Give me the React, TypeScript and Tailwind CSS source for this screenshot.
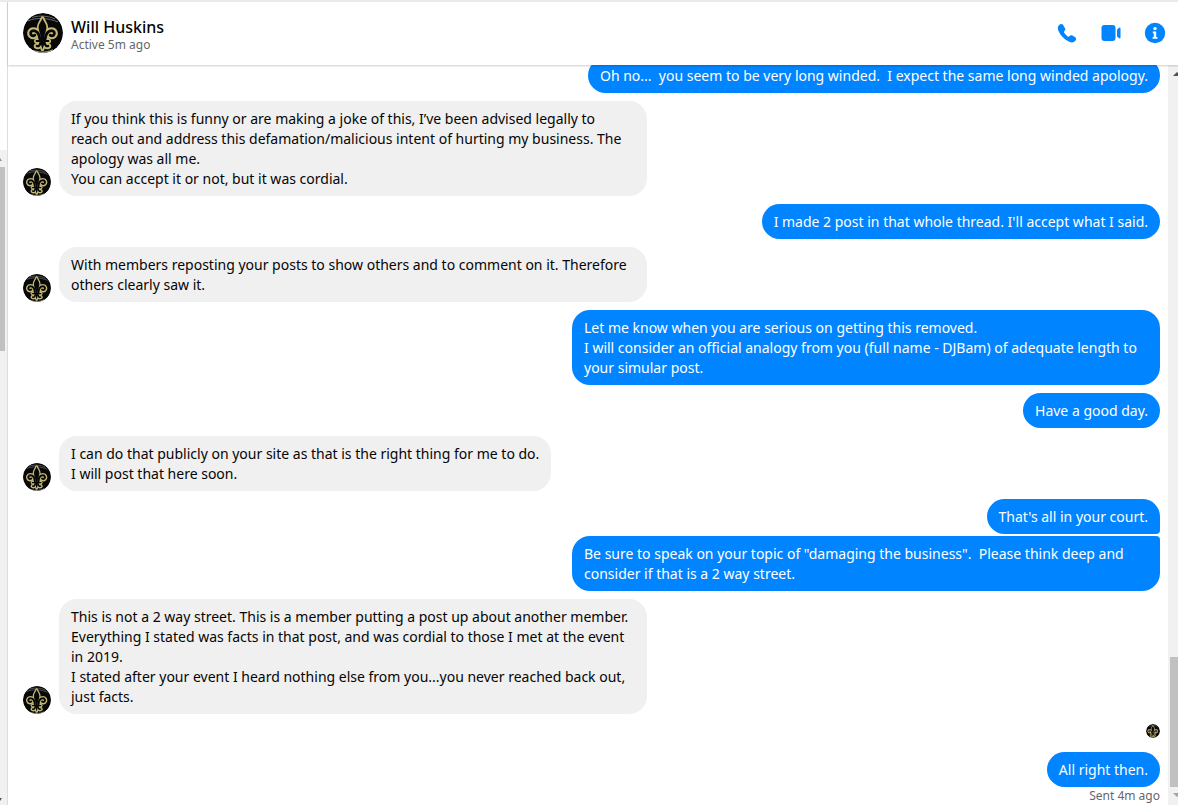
import React from "react";

type Message = {
  from: "me" | "them";
  lines: string[];
  shape?: string;
  gap?: string;
};

const messages: Message[] = [
  { from: "me", lines: ["Oh no...  you seem to be very long winded.  I expect the same long winded apology."] },
  {
    from: "them",
    gap: "mt-2",
    lines: [
      "If you think this is funny or are making a joke of this, I’ve been advised legally to",
      "reach out and address this defamation/malicious intent of hurting my business. The",
      "apology was all me.",
      "You can accept it or not, but it was cordial.",
    ],
  },
  { from: "me", gap: "mt-2", lines: ["I made 2 post in that whole thread. I'll accept what I said."] },
  {
    from: "them",
    gap: "mt-2",
    lines: [
      "With members reposting your posts to show others and to comment on it. Therefore",
      "others clearly saw it.",
    ],
  },
  {
    from: "me",
    gap: "mt-2",
    lines: [
      "Let me know when you are serious on getting this removed.",
      "I will consider an official analogy from you (full name - DJBam) of adequate length to",
      "your simular post.",
    ],
  },
  { from: "me", gap: "mt-2", lines: ["Have a good day."] },
  {
    from: "them",
    gap: "mt-2",
    lines: [
      "I can do that publicly on your site as that is the right thing for me to do.",
      "I will post that here soon.",
    ],
  },
  { from: "me", gap: "mt-2", shape: "rounded-br-sm", lines: ["That's all in your court."] },
  {
    from: "me",
    gap: "mt-0.5",
    shape: "rounded-tr-sm",
    lines: [
      "Be sure to speak on your topic of \"damaging the business\".  Please think deep and",
      "consider if that is a 2 way street.",
    ],
  },
  {
    from: "them",
    gap: "mt-2",
    lines: [
      "This is not a 2 way street. This is a member putting a post up about another member.",
      "Everything I stated was facts in that post, and was cordial to those I met at the event",
      "in 2019.",
      "I stated after your event I heard nothing else from you...you never reached back out,",
      "just facts.",
    ],
  },
];

function Avatar({ size }: { size: string }) {
  const curls =
    "M16.8 26 C16.5 20.5 13.5 17.6 10.5 17.6 C7.6 17.6 6.8 20.5 8.4 22.2 C9.4 23 11 22.8 11.8 22.2 M22.2 26 C22.5 20.5 25.5 17.6 28.5 17.6 C31.4 17.6 32.2 20.5 30.6 22.2 C29.6 23 28 22.8 27.2 22.2";
  const feet = "M17.5 29.5 C17 32.5 15.5 33.8 13.8 33 M21.5 29.5 C22 32.5 23.5 33.8 25.2 33";
  const petal =
    "M19.5 5 C18.8 8 15.6 10.5 15.6 14.5 C15.8 18.5 17.8 21 18 26 L17.8 31 L19.5 36.5 L21.2 31 L21 26 C21.2 21 23.2 18.5 23.4 14.5 C23.4 10.5 20.2 8 19.5 5 Z";
  return (
    <svg viewBox="0 0 40 40" className={`shrink-0 rounded-full ${size}`} role="img" aria-label="Will Huskins">
      <circle cx="20" cy="20" r="20" fill="#080808" />
      <path d="M5 8 C13 4 26 5 35 9 M9 4.5 C16 2 26 3 32 6" fill="none" stroke="#6a6d6f" strokeWidth="1" />
      <path d="M11 38 C17 40 24 40 30 37" fill="none" stroke="#999999" strokeWidth="1.4" />
      <g fill="none" strokeLinecap="round" strokeLinejoin="round">
        <path d={curls} stroke="#c4b972" strokeWidth="6.8" />
        <path d={feet} stroke="#c4b972" strokeWidth="6" />
        <path d={petal} stroke="#c4b972" strokeWidth="3.6" />
        <path d="M13.5 28 H25.5" stroke="#c4b972" strokeWidth="5" />
        <path d={curls} stroke="#080808" strokeWidth="2.8" />
        <path d={feet} stroke="#080808" strokeWidth="2.2" />
        <path d={petal} fill="#080808" />
        <path d="M13.5 28 H25.5" stroke="#080808" strokeWidth="1.8" />
      </g>
    </svg>
  );
}

function Bubble({ from, lines, shape = "" }: Message) {
  const look = from === "me" ? "bg-[#0084ff] text-white" : "bg-[#f0f0f0] text-[#050505]";
  const width = lines.length > 1 && lines.some((l) => l.length > 78) ? "w-[588px]" : "";
  return (
    <div className={`max-w-[588px] rounded-[18px] px-3 pt-2 pb-[7px] text-sm leading-5 whitespace-pre ${look} ${width} ${shape}`}>
      {lines.map((line) => (
        <p key={line}>{line}</p>
      ))}
    </div>
  );
}

function Row(message: Message) {
  const mine = message.from === "me";
  return (
    <li className={`flex shrink-0 items-end gap-2 ${mine ? "justify-end" : ""} ${message.gap ?? ""}`}>
      {!mine && <Avatar size="size-7" />}
      <Bubble {...message} />
    </li>
  );
}

function SidebarEdge() {
  return (
    <div className="flex w-2 shrink-0 flex-col border-r border-[#dddddd] pt-[148px]" aria-hidden="true">
      <div className="flex flex-1 flex-col overflow-hidden bg-[#f1f1f1]">
        <svg viewBox="0 0 7 17" className="h-[17px] w-[7px]">
          <path d="M-2 11 L0 8 L2 11 Z" fill="#909090" />
        </svg>
        <div className="h-[184px] w-[5px] bg-[#c1c1c1]" />
        <svg viewBox="0 0 7 17" className="mt-auto h-[17px] w-[7px]">
          <path d="M-2 10 H2 L0 13 Z" fill="#505050" />
        </svg>
      </div>
    </div>
  );
}

function Scrollbar() {
  return (
    <div className="flex w-2.5 shrink-0 flex-col overflow-hidden bg-[#f1f1f1]" aria-hidden="true">
      <svg viewBox="0 0 10 17" className="h-[17px] w-2.5">
        <path d="M5 11 L9 7 L13 11 Z" fill="#505050" />
      </svg>
      <div className="mt-auto ml-0.5 h-[130px] shrink-0 bg-[#c1c1c1]" />
      <svg viewBox="0 0 10 18" className="h-[18px] w-2.5 shrink-0">
        <path d="M5 6 H13 L9 10 Z" fill="#a3a3a3" />
      </svg>
    </div>
  );
}

export default function App() {
  return (
    <div className="flex h-screen overflow-hidden border-t-2 border-[#ebebeb] bg-white font-['Noto_Sans','Open_Sans',sans-serif]">
      <SidebarEdge />
      <div className="flex min-w-0 flex-1 flex-col">
        <header className="z-10 flex h-[63px] shrink-0 items-center gap-2 bg-white pr-[11px] pb-px pl-[15px] shadow-[0_1px_2px_rgba(0,0,0,0.2)]">
          <Avatar size="size-10" />
          <div className="min-w-0 flex-1 pt-1">
            <h1 className="text-base leading-5 font-medium text-[#050505]">Will Huskins</h1>
            <p className="text-xs leading-4 text-[#65676b]">Active 5m ago</p>
          </div>
          <nav className="flex items-center gap-5 text-[#0084ff]">
            <button type="button" aria-label="Start a voice call">
              <svg viewBox="0 0 24 24" className="size-6" fill="currentColor">
                <path d="M4.2 4.1C5.4 2.8 7.2 2.7 8.1 4L9.9 7C10.6 8.2 10.3 9.2 9.5 10C8.8 10.7 8.8 11.2 9.3 11.9C10.2 13.2 11.3 14.4 12.7 15.4C13.4 15.9 13.9 15.8 14.5 15.1C15.3 14.3 16.3 14 17.4 14.6L20.2 16.3C21.5 17.1 21.4 18.8 20.2 20C18.7 21.6 16.7 21.8 14.2 20.7C9.2 18.4 5.7 14.7 3.5 9.9C2.4 7.5 2.6 5.7 4.2 4.1Z" />
              </svg>
            </button>
            <button type="button" aria-label="Start a video call">
              <svg viewBox="0 0 24 24" className="size-6" fill="currentColor">
                <rect x="2.5" y="4" width="14" height="16" rx="3" />
                <path d="M18 9.2C18 8.6 18.3 8.2 18.8 7.8L20.2 6.8C20.8 6.4 21.5 6.7 21.5 7.5V16.5C21.5 17.3 20.8 17.6 20.2 17.2L18.8 16.2C18.3 15.8 18 15.4 18 14.8Z" />
              </svg>
            </button>
            <button type="button" aria-label="Conversation information">
              <svg viewBox="0 0 24 24" className="size-6" fill="currentColor">
                <circle cx="12" cy="12" r="10.2" />
                <circle cx="12" cy="7.6" r="1.7" fill="white" />
                <path d="M9.8 10.5H13.2V16H14.4V17.7H9.6V16H10.8V12.2H9.8Z" fill="white" />
              </svg>
            </button>
          </nav>
        </header>
        <div className="flex min-h-0 flex-1">
          <main className="flex min-w-0 flex-1 flex-col justify-end overflow-hidden pr-2 pl-[15px]">
            <ol className="flex shrink-0 flex-col">
              {messages.map((m) => (
                <Row key={m.lines[0]} {...m} />
              ))}
              <li className="mt-2.5 flex justify-end">
                <Avatar size="size-3.5" />
              </li>
              <Row from="me" gap="mt-3.5" lines={["All right then."]} />
            </ol>
            <p className="shrink-0 text-right text-xs leading-[18px] text-[#65676b]">Sent 4m ago</p>
          </main>
          <Scrollbar />
        </div>
      </div>
    </div>
  );
}
